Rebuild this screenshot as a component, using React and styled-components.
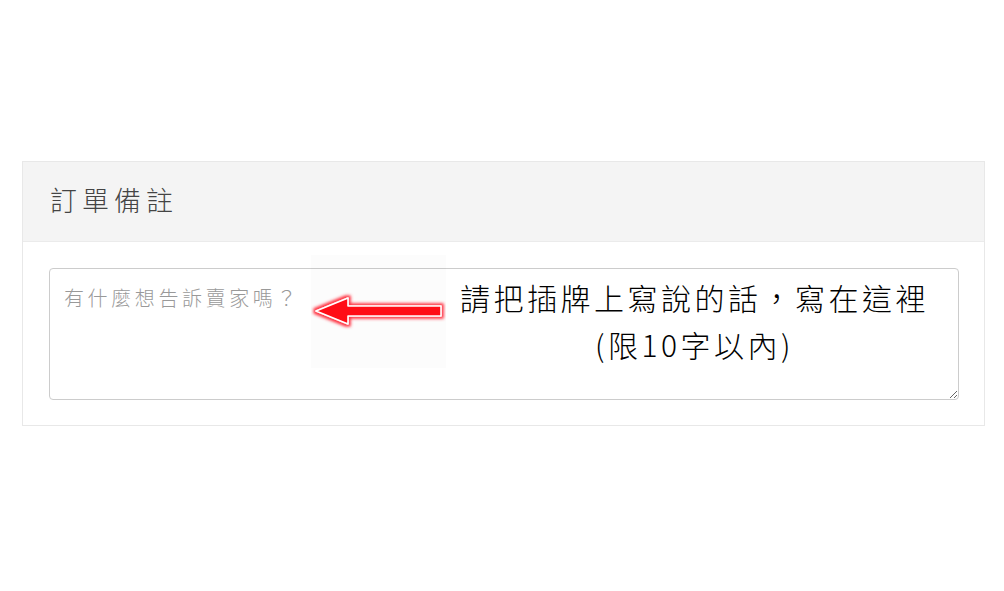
import styled, { createGlobalStyle } from "styled-components";

const GlobalStyle = createGlobalStyle`
  body {
    margin: 0;
    background: #fff;
    font-family: "Noto Sans CJK TC", "Noto Sans", sans-serif;
  }
`;

const Page = styled.div`
  padding: 161px 19px 0 22px;
`;

const Panel = styled.section`
  border: 1px solid #e8e8e8;
  background: #fff;
`;

const PanelHeader = styled.div`
  height: 79px;
  display: flex;
  align-items: center;
  padding-left: 27px;
  background: #f4f4f4;
  border-bottom: 1px solid #ebebeb;
`;

const PanelTitle = styled.h3`
  margin: 0 0 4px;
  font-size: 27px;
  font-weight: 300;
  letter-spacing: 5px;
  color: #444;
`;

const PanelBody = styled.div`
  position: relative;
  padding: 26px 25px 25px 26px;
`;

const NoteArea = styled.textarea`
  display: block;
  box-sizing: border-box;
  width: 100%;
  height: 132px;
  padding: 14px 14px;
  border: 1px solid #ccc;
  border-radius: 4px;
  font-family: "Noto Sans CJK TC", sans-serif;
  font-size: 20px;
  font-weight: 300;
  letter-spacing: 3.6px;
  color: #333;
  &::placeholder {
    color: #999;
  }
`;

const Hint = styled.div`
  position: absolute;
  left: 288px;
  top: 13px;
  display: flex;
  align-items: flex-start;
  pointer-events: none;
`;

const ArrowBox = styled.div`
  width: 135px;
  height: 113px;
  background: rgba(0, 0, 0, 0.01);
`;

const HintText = styled.div`
  margin-left: 14px;
  margin-top: 19px;
  text-align: center;
  font-family: "Noto Sans CJK TC", sans-serif;
  font-size: 30px;
  font-weight: 300;
  line-height: 47px;
  letter-spacing: 3.5px;
  color: #000;
`;

function Arrow() {
  return (
    <svg width="135" height="113" viewBox="0 0 135 113">
      <defs>
        <filter id="glow" x="-20%" y="-60%" width="140%" height="220%">
          <feMorphology in="SourceAlpha" operator="dilate" radius="1.5" result="grow" />
          <feGaussianBlur in="grow" stdDeviation="1.6" result="blur" />
          <feFlood floodColor="#ff3040" result="red" />
          <feComposite in="red" in2="blur" operator="in" result="halo" />
          <feMerge>
            <feMergeNode in="halo" />
            <feMergeNode in="SourceGraphic" />
          </feMerge>
        </filter>
      </defs>
      <polygon
        points="5,56 37,43 37,51 130,51 130,61 37,61 37,69"
        fill="#ff0a14"
        stroke="#ffffff"
        strokeWidth="1.6"
        strokeLinejoin="round"
        filter="url(#glow)"
      />
    </svg>
  );
}

export default function App() {
  return (
    <Page>
      <GlobalStyle />
      <Panel>
        <PanelHeader>
          <PanelTitle>訂單備註</PanelTitle>
        </PanelHeader>
        <PanelBody>
          <NoteArea placeholder="有什麼想告訴賣家嗎？" />
          <Hint>
            <ArrowBox>
              <Arrow />
            </ArrowBox>
            <HintText>
              請把插牌上寫說的話，寫在這裡
              <br />
              (限10字以內)
            </HintText>
          </Hint>
        </PanelBody>
      </Panel>
    </Page>
  );
}
